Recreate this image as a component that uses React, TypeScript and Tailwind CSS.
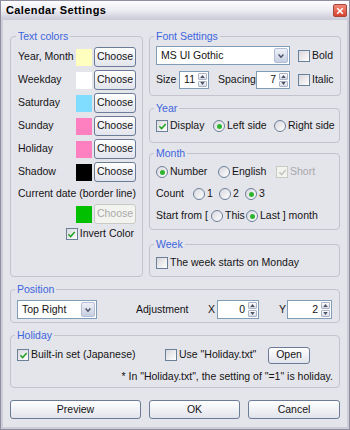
import type { ReactNode } from "react"

const textColors: Array<[string, string]> = [
  ["Year, Month", "#ffffc0"],
  ["Weekday", "#ffffff"],
  ["Saturday", "#80ddff"],
  ["Sunday", "#ff80c0"],
  ["Holiday", "#ff80c0"],
  ["Shadow", "#000000"],
]

function Btn({ children, className = "", disabled = false }: { children: ReactNode; className?: string; disabled?: boolean }) {
  return (
    <div
      className={`flex shrink-0 items-center justify-center rounded-[3px] border ${
        disabled
          ? "border-[#cacac4] bg-[#f3f3ef] text-[#aaaaaa]"
          : "border-[#6c7c97] bg-linear-to-b from-white to-[#e2e4ec] text-[#141414]"
      } ${className}`}
    >
      {children}
    </div>
  )
}

function Check({ checked = false, disabled = false }: { checked?: boolean; disabled?: boolean }) {
  return (
    <span
      className={`flex h-[12px] w-[12px] shrink-0 items-center justify-center border ${
        disabled ? "border-[#cacac4] bg-[#f3f3ef]" : "border-[#6b7f99] bg-linear-to-br from-[#d8d8de] to-white"
      }`}
    >
      {checked && (
        <svg viewBox="0 0 10 10" className="h-[9px] w-[9px]">
          <path d="M1.5 4.8 L4 7.3 L8.6 2.2" fill="none" stroke={disabled ? "#c4c4c4" : "#22a322"} strokeWidth="1.7" />
        </svg>
      )}
    </span>
  )
}

function Radio({ checked = false }: { checked?: boolean }) {
  return (
    <span className="flex h-[12px] w-[12px] shrink-0 items-center justify-center rounded-full border border-[#6b7f99] bg-linear-to-br from-[#d8d8de] to-white">
      {checked && <span className="h-[5px] w-[5px] rounded-full bg-[#2db52d]" />}
    </span>
  )
}

function Opt({ children, className = "", disabled = false }: { children: ReactNode; className?: string; disabled?: boolean }) {
  return <span className={`flex items-center gap-[2px] ${disabled ? "text-[#a8a8a8]" : ""} ${className}`}>{children}</span>
}

function Arrow({ up }: { up?: boolean }) {
  return (
    <span className="flex flex-1 items-center justify-center rounded-[1px] border border-[#aab4c6] bg-linear-to-b from-white to-[#d6dae4]">
      <svg viewBox="0 0 6 4" className="h-[3px] w-[5px]">
        <path d={up ? "M0 4 L3 0 L6 4 Z" : "M0 0 L3 4 L6 0 Z"} fill="#4a5263" />
      </svg>
    </span>
  )
}

function Spin({ value, className = "" }: { value: string; className?: string }) {
  return (
    <div className={`flex h-[18px] shrink-0 items-stretch border border-[#7f9db9] bg-white ${className}`}>
      <span className="flex flex-1 items-center justify-end pr-[3px]">{value}</span>
      <div className="flex w-[10px] flex-col gap-px py-px pr-px">
        <Arrow up />
        <Arrow />
      </div>
    </div>
  )
}

function Select({ value, className = "" }: { value: string; className?: string }) {
  return (
    <div className={`flex h-[19px] shrink-0 items-stretch border border-[#7f9db9] bg-white ${className}`}>
      <span className="flex flex-1 items-center pl-[4px]">{value}</span>
      <span className="m-px flex w-[14px] items-center justify-center rounded-[2px] border border-[#b2bed6] bg-linear-to-b from-[#eef1f8] to-[#c6cee2]">
        <svg viewBox="0 0 10 10" className="h-[8px] w-[8px]">
          <path d="M2 3.2 L5 6.4 L8 3.2" fill="none" stroke="#4b5264" strokeWidth="1.8" />
        </svg>
      </span>
    </div>
  )
}

function Group({ title, children, className = "" }: { title: string; children: ReactNode; className?: string }) {
  return (
    <fieldset className={`rounded-[4px] border border-[#c3c3cd] ${className}`}>
      <legend className="-ml-[2px] px-[2px] leading-[14px] text-[#3c66dc]">{title}</legend>
      {children}
    </fieldset>
  )
}

export default function App() {
  return (
    <div className="flex h-[430px] w-[350px] flex-col border border-[#8e8e9e] bg-[#cdcdd9] font-['Liberation_Sans',Arial,sans-serif] text-[10.5px] text-[#141414]">
      <div className="flex h-[19px] shrink-0 items-center justify-between bg-linear-to-b from-[#fdfdff] via-[#ececf2] to-[#c9c9d8] pl-[5px] pr-[2px]">
        <span className="text-[11px] font-bold tracking-[0.4px] text-black">Calendar Settings</span>
        <span className="flex h-[13px] w-[14px] items-center justify-center rounded-[2px] border border-[#a8453a] bg-linear-to-b from-[#f08a78] to-[#d6402e]">
          <svg viewBox="0 0 10 10" className="h-[8px] w-[8px]">
            <path d="M1.5 1.5 L8.5 8.5 M8.5 1.5 L1.5 8.5" stroke="white" strokeWidth="2" />
          </svg>
        </span>
      </div>

      <div className="mx-[2px] mb-[2px] flex flex-1 flex-col bg-[#e4e4eb] px-[7px] pt-[9px]">
        <div className="flex h-[248px] gap-[6px]">
          <Group title="Text colors" className="w-[133px] pl-[7px] pr-[6px]">
            <div className="flex flex-col gap-[3px] pt-[4px]">
              {textColors.map(([label, color]) => (
                <div key={label} className="flex h-[20px] items-center gap-[2px]">
                  <span className="flex-1">{label}</span>
                  <span className="h-[17px] w-[16px]" style={{ backgroundColor: color }} />
                  <Btn className="h-[20px] w-[42px]">Choose</Btn>
                </div>
              ))}
            </div>
            <div className="mt-[4px] leading-[14px]">Current date (border line)</div>
            <div className="mt-[4px] flex h-[20px] items-center justify-end gap-[2px]">
              <span className="h-[17px] w-[16px] bg-[#00c000]" />
              <Btn disabled className="h-[20px] w-[42px]">Choose</Btn>
            </div>
            <div className="mt-[3px] flex h-[14px] items-center justify-end pr-[2px]">
              <Opt>
                <Check checked />
                Invert Color
              </Opt>
            </div>
          </Group>

          <div className="flex w-[191px] flex-col">
            <Group title="Font Settings" className="h-[67px] pl-[6px] pr-[6px]">
              <div className="mt-[3px] flex items-center">
                <Select value="MS UI Gothic" className="w-[134px]" />
                <Opt className="ml-[8px]">
                  <Check />
                  Bold
                </Opt>
              </div>
              <div className="mt-[6px] flex items-center">
                <span className="w-[23px]">Size</span>
                <Spin value="11" className="w-[30px]" />
                <span className="ml-[9px] w-[38px]">Spacing</span>
                <Spin value="7" className="w-[34px]" />
                <Opt className="ml-[8px]">
                  <Check />
                  Italic
                </Opt>
              </div>
            </Group>

            <Group title="Year" className="mt-[5px] h-[42px] pl-[6px]">
              <div className="mt-[4px] flex h-[14px] items-center">
                <Opt className="w-[57px]">
                  <Check checked />
                  Display
                </Opt>
                <Opt className="w-[61px]">
                  <Radio checked />
                  Left side
                </Opt>
                <Opt>
                  <Radio />
                  Right side
                </Opt>
              </div>
            </Group>

            <Group title="Month" className="mt-[3px] h-[84px] pl-[6px]">
              <div className="mt-[5px] flex flex-col gap-[8px]">
                <div className="flex h-[14px] items-center">
                  <Opt className="w-[62px]">
                    <Radio checked />
                    Number
                  </Opt>
                  <Opt className="w-[58px]">
                    <Radio />
                    English
                  </Opt>
                  <Opt disabled>
                    <Check checked disabled />
                    Short
                  </Opt>
                </div>
                <div className="flex h-[14px] items-center">
                  <span className="w-[37px]">Count</span>
                  <Opt className="w-[26px]">
                    <Radio />1
                  </Opt>
                  <Opt className="w-[26px]">
                    <Radio />2
                  </Opt>
                  <Opt>
                    <Radio checked />3
                  </Opt>
                </div>
                <div className="flex h-[14px] items-center">
                  <span className="w-[55px]">Start from [</span>
                  <Opt className="w-[35px]">
                    <Radio />
                    This
                  </Opt>
                  <Opt>
                    <Radio checked />
                    Last ] month
                  </Opt>
                </div>
              </div>
            </Group>

            <Group title="Week" className="mt-[7px] h-[40px] pl-[6px]">
              <div className="mt-[5px] flex h-[14px] items-center">
                <Opt>
                  <Check />
                  The week starts on Monday
                </Opt>
              </div>
            </Group>
          </div>
        </div>

        <Group title="Position" className="mt-[5px] h-[41px] pl-[6px]">
          <div className="mt-[4px] flex items-center">
            <Select value="Top Right" className="w-[80px]" />
            <span className="ml-[39px] w-[72px]">Adjustment</span>
            <span className="w-[9px]">X</span>
            <Spin value="0" className="h-[19px] w-[42px]" />
            <span className="ml-[20px] w-[8px]">Y</span>
            <Spin value="2" className="h-[19px] w-[45px]" />
          </div>
        </Group>

        <Group title="Holiday" className="mt-[5px] h-[60px] pl-[6px] pr-[6px]">
          <div className="mt-[4px] flex h-[18px] items-center">
            <Opt className="w-[148px]">
              <Check checked />
              Built-in set (Japanese)
            </Opt>
            <Opt className="w-[103px]">
              <Check />
              Use "Holiday.txt"
            </Opt>
            <Btn className="h-[17px] w-[42px]">Open</Btn>
          </div>
          <div className="mt-[5px] text-right leading-[14px]">* In "Holiday.txt", the setting of "=1" is holiday.</div>
        </Group>

        <div className="mt-[12px] flex gap-[8px]">
          <Btn className="h-[19px] w-[131px]">Preview</Btn>
          <Btn className="h-[19px] w-[91px]">OK</Btn>
          <Btn className="h-[19px] w-[92px]">Cancel</Btn>
        </div>
      </div>
    </div>
  )
}
